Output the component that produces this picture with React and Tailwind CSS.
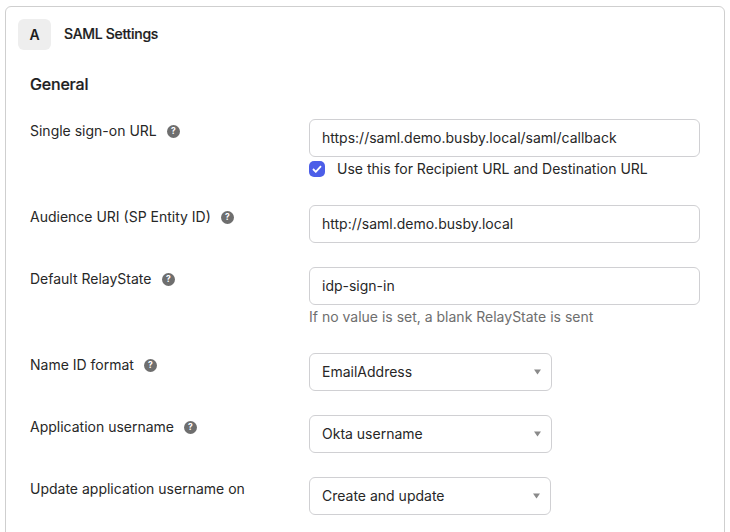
const font = { fontFamily: "Inter, sans-serif" };

function Help({ gap = "ml-[10px]" }) {
  return (
    <svg width="13" height="13" viewBox="0 0 13 13" className={`${gap} shrink-0`}>
      <circle cx="6.5" cy="6.5" r="6.5" fill="#6e6e6e" />
      <text x="6.5" y="9.4" textAnchor="middle" fontSize="8.5" fontWeight="700" fill="#fff" fontFamily="Inter, sans-serif">?</text>
    </svg>
  );
}

function Label({ text, help = true, gap }) {
  return (
    <div className="w-[279px] shrink-0 flex items-center h-[24px] text-[14px] leading-[24px] text-[#272727]">
      <span>{text}</span>
      {help && <Help gap={gap} />}
    </div>
  );
}

function Field({ value }) {
  return (
    <div className="w-[391px] h-[38px] border border-[#d0d0d3] rounded-[6px] pl-3 pr-3 pb-[1px] flex items-center text-[14px] text-[#272727] bg-white">
      {value}
    </div>
  );
}

function Select({ value, w = "w-[243px]" }) {
  return (
    <div className={`${w} h-[38px] border border-[#d0d0d3] rounded-[6px] pl-3 pr-[10px] pb-[1px] flex items-center justify-between text-[14px] text-[#272727] bg-white`}>
      <span>{value}</span>
      <svg width="7" height="6" viewBox="0 0 7 6" className="mt-[1px]"><path d="M0 0.5H7L3.5 5.5Z" fill="#8a8a8a" /></svg>
    </div>
  );
}

export default function App() {
  return (
    <div className="w-[730px] h-[532px] overflow-hidden bg-white pt-[6px] pl-[5px]" style={font}>
      <div className="w-[720px] h-[540px] border border-[#cfcfcf] rounded-[6px] pt-3 pl-3">
        <div className="flex items-center h-[31px]">
          <div className="w-[33px] h-[31px] rounded-[6px] bg-[#eeeeee] flex items-center justify-center pb-[1px] text-[14px] font-semibold text-[#1d1d21]">A</div>
          <div className="ml-[13px] pb-[2px] text-[14px] font-medium text-[#1d1d21] [-webkit-text-stroke:0.2px_#1d1d21] tracking-[-0.3px]">SAML Settings</div>
        </div>
        <div className="pl-3 mt-[22px]">
          <div className="text-[16px] leading-[24px] font-medium text-[#1d1d21] [-webkit-text-stroke:0.2px_#1d1d21] tracking-[-0.2px]">General</div>
          <div className="mt-[23px] flex">
            <Label text="Single sign-on URL" />
            <div>
              <Field value="https://saml.demo.busby.local/saml/callback" />
              <div className="flex items-center mt-[4px] h-[16px]">
                <div className="w-4 h-4 rounded-[5px] bg-[#4c5ee8] flex items-center justify-center">
                  <svg width="10" height="8" viewBox="0 0 10 8"><path d="M1 4l2.8 2.8L9 1.2" stroke="#fff" strokeWidth="1.8" fill="none" /></svg>
                </div>
                <span className="ml-3 pb-[1px] text-[14px] text-[#272727]">Use this for Recipient URL and Destination URL</span>
              </div>
            </div>
          </div>
          <div className="mt-[28px] flex">
            <Label text="Audience URI (SP Entity ID)" />
            <Field value="http://saml.demo.busby.local" />
          </div>
          <div className="mt-[24px] flex">
            <Label text="Default RelayState" gap="ml-[11px]" />
            <div>
              <Field value="idp-sign-in" />
              <div className="mt-[2px] text-[14px] leading-[20px] text-[#6e6e6e]">If no value is set, a blank RelayState is sent</div>
            </div>
          </div>
          <div className="mt-[26px] flex">
            <Label text="Name ID format" />
            <Select value="EmailAddress" />
          </div>
          <div className="mt-[24px] flex">
            <Label text="Application username" />
            <Select value="Okta username" />
          </div>
          <div className="mt-[24px] flex">
            <Label text="Update application username on" help={false} />
            <Select value="Create and update" w="w-[242px]" />
          </div>
        </div>
      </div>
    </div>
  );
}
